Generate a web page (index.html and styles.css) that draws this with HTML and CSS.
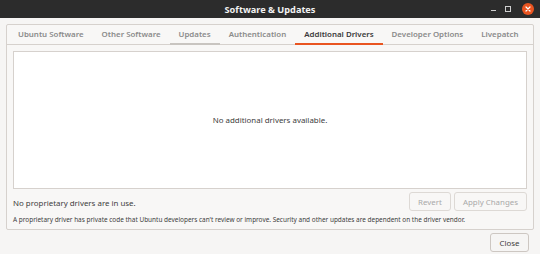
FILE: index.html
```html
<!DOCTYPE html>
<html lang="en">
<head>
    <meta charset="UTF-8">
    <title>Software &amp; Updates</title>
    <link rel="stylesheet" href="styles.css">
</head>
<body>
    <div class="window">
        <!-- Title bar -->
        <div class="titlebar">
            <span class="title">Software &amp; Updates</span>
            <div class="controls">
                <span class="ctl-min"></span>
                <span class="ctl-max"></span>
                <span class="ctl-close">
                    <svg width="12" height="12" viewBox="0 0 12 12">
                        <circle cx="6" cy="6" r="6" fill="#e95420"/>
                        <path d="M4 4 L8 8 M8 4 L4 8" stroke="#fff" stroke-width="1.2" stroke-linecap="round"/>
                    </svg>
                </span>
            </div>
        </div>

        <div class="content">
            <div class="notebook">
                <div class="tabs">
                    <span class="tab">Ubuntu Software</span>
                    <span class="tab">Other Software</span>
                    <span class="tab tab-updates">Updates</span>
                    <span class="tab">Authentication</span>
                    <span class="tab tab-active">Additional Drivers</span>
                    <span class="tab">Developer Options</span>
                    <span class="tab">Livepatch</span>
                </div>

                <div class="page">
                    <div class="driver-list">
                        <span>No additional drivers available.</span>
                    </div>

                    <div class="status-row">
                        <span class="status">No proprietary drivers are in use.</span>
                        <div class="actions">
                            <button class="btn btn-disabled">Revert</button>
                            <button class="btn btn-disabled">Apply Changes</button>
                        </div>
                    </div>

                    <p class="note">A proprietary driver has private code that Ubuntu developers can't review or improve. Security and other updates are dependent on the driver vendor.</p>
                </div>
            </div>

            <div class="footer">
                <button class="btn">Close</button>
            </div>
        </div>
    </div>
</body>
</html>
```

FILE: styles.css
```css
body {
    margin: 0;
    padding: 0;
    font-family: "Noto Sans", "DejaVu Sans", sans-serif;
    background-color: #f6f5f4;
    color: #3d3d3d;
}

.window {
    width: 540px;
    height: 254px;
    display: flex;
    flex-direction: column;
    overflow: hidden;
}

/* Title bar */
.titlebar {
    height: 18px;
    flex-shrink: 0;
    background-color: #2c2c2c;
    display: flex;
    align-items: center;
    justify-content: center;
    position: relative;
}

.title {
    color: #f2f2f2;
    font-size: 9.2px;
    font-weight: bold;
}

.controls {
    position: absolute;
    right: 6px;
    top: 3px;
    display: flex;
    align-items: center;
    gap: 7px;
    height: 12px;
}

.ctl-min {
    width: 5px;
    height: 1px;
    background-color: #cfcfcf;
    margin-top: 3px;
}

.ctl-max {
    width: 4px;
    height: 4px;
    border: 1px solid #cfcfcf;
    margin-left: 2px;
}

.ctl-close {
    display: flex;
    margin-left: 4px;
}

/* Main area */
.content {
    padding: 6px 6px 0 6px;
    display: flex;
    flex-direction: column;
}

.notebook {
    border: 1px solid #d6d1cd;
    border-radius: 2px;
    background-color: #f8f7f6;
    display: flex;
    flex-direction: column;
}

/* Tabs */
.tabs {
    height: 19px;
    border-bottom: 1px solid #d6d1cd;
    display: flex;
    align-items: stretch;
    padding-left: 2px;
}

.tab {
    display: flex;
    align-items: center;
    padding: 0 9px;
    font-size: 7.9px;
    font-weight: 600;
    white-space: nowrap;
    color: #8b8b8b;
    border-bottom: 2px solid transparent;
    margin-bottom: -1px;
}

.tab-updates {
    border-bottom-color: #c8c4c0;
}

.tab-active {
    color: #3a3a3a;
    border-bottom-color: #e95420;
}

/* Page */
.page {
    padding: 6px 6px 5px 6px;
}

.driver-list {
    height: 136px;
    background-color: #ffffff;
    border: 1px solid #d6d1cd;
    display: flex;
    align-items: center;
    justify-content: center;
    font-size: 7.9px;
    color: #3d3d3d;
}

.status-row {
    display: flex;
    justify-content: space-between;
    align-items: center;
    margin-top: 3px;
}

.status {
    font-size: 7.9px;
    color: #3d3d3d;
    padding-top: 2px;
}

.actions {
    display: flex;
    gap: 3px;
}

.btn {
    font-family: "Noto Sans", "DejaVu Sans", sans-serif;
    font-size: 7.9px;
    height: 19px;
    padding: 0 8px;
    border: 1px solid #cdc7c2;
    border-radius: 3px;
    background-color: #f6f5f4;
    color: #3d3d3d;
}

.btn-disabled {
    color: #a9a9a9;
    border-color: #ddd9d5;
    background-color: #f8f7f6;
}

.note {
    margin: 4px 0 0 0;
    height: 9px;
    line-height: 9px;
    font-size: 6.45px;
    color: #3d3d3d;
}

.footer {
    display: flex;
    justify-content: flex-end;
    padding: 3px 5px 0 0;
}

.footer .btn {
    width: 39px;
    padding: 0;
}
```
